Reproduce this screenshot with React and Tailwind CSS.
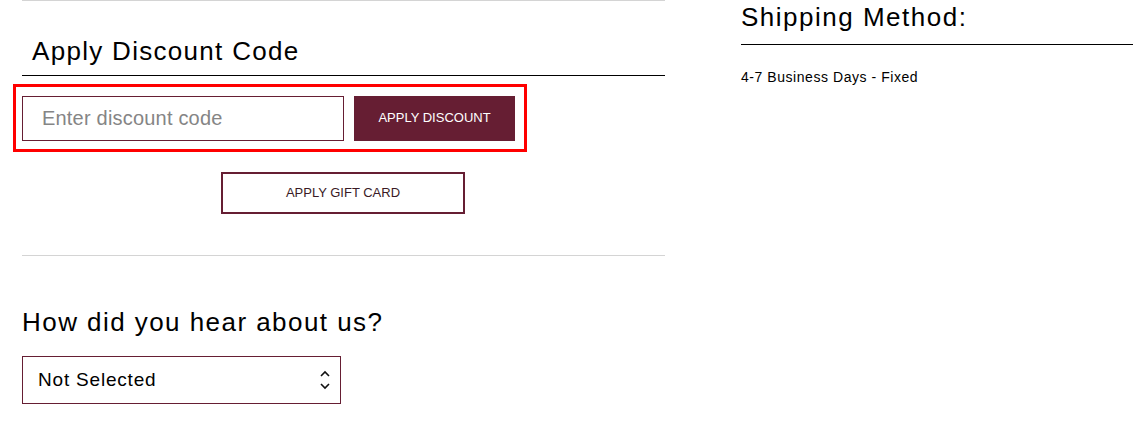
import React from 'react';

const maroon = 'border-[#661e33]';

const App = () => {
  return (
    <div className="w-[1133px] h-[444px] bg-white overflow-hidden flex font-['Liberation_Sans',Arial,sans-serif] text-black">
      {/* left column */}
      <div className="ml-[22px] w-[643px] flex flex-col">
        <div className="h-px bg-[#d4d4d4]" />
        <h2 className="ml-[10px] mt-[34px] text-[26px] leading-[32px] tracking-[1.3px]">Apply Discount Code</h2>
        <div className="mt-[8px] h-px bg-black" />

        <div className="-ml-[9px] mt-[8px] w-[514px] h-[68px] border-[3px] border-[#ff0000] flex items-center gap-[10px] pl-[6px]">
          <input
            type="text"
            placeholder="Enter discount code"
            className={`w-[322px] h-[45px] border ${maroon} px-[19px] text-[20px] tracking-[0.2px] placeholder:text-[#858585] outline-none`}
          />
          <button className="w-[161px] h-[45px] bg-[#661e33] text-white text-[13px] uppercase">
            Apply Discount
          </button>
        </div>

        <div className="mt-[20px] flex">
          <button className={`ml-[199px] w-[244px] h-[42px] border-2 ${maroon} text-[#3a1a25] text-[13px] uppercase`}>
            Apply Gift Card
          </button>
        </div>

        <div className="mt-[41px] h-px bg-[#d4d4d4]" />

        <h2 className="mt-[50px] text-[26px] leading-[32px] tracking-[1.45px]">How did you hear about us?</h2>

        <div className={`mt-[18px] w-[319px] h-[48px] border ${maroon} flex items-center justify-between pl-[15px] pr-[9px]`}>
          <span className="text-[19px] tracking-[0.8px]">Not Selected</span>
          <svg width="12" height="22" viewBox="0 0 12 22" fill="none" stroke="#111" strokeWidth="1.6">
            <path d="M2 7 L6 3 L10 7" />
            <path d="M2 15 L6 19 L10 15" />
          </svg>
        </div>
      </div>

      {/* right column */}
      <div className="ml-[76px] flex-1 flex flex-col">
        <h2 className="mt-[1px] text-[26px] leading-[32px] tracking-[1.5px]">Shipping Method:</h2>
        <div className="mt-[11px] h-px bg-black" />
        <p className="mt-[22px] text-[14px] tracking-[0.55px]">4-7 Business Days - Fixed</p>
      </div>
    </div>
  );
};

export default App;
